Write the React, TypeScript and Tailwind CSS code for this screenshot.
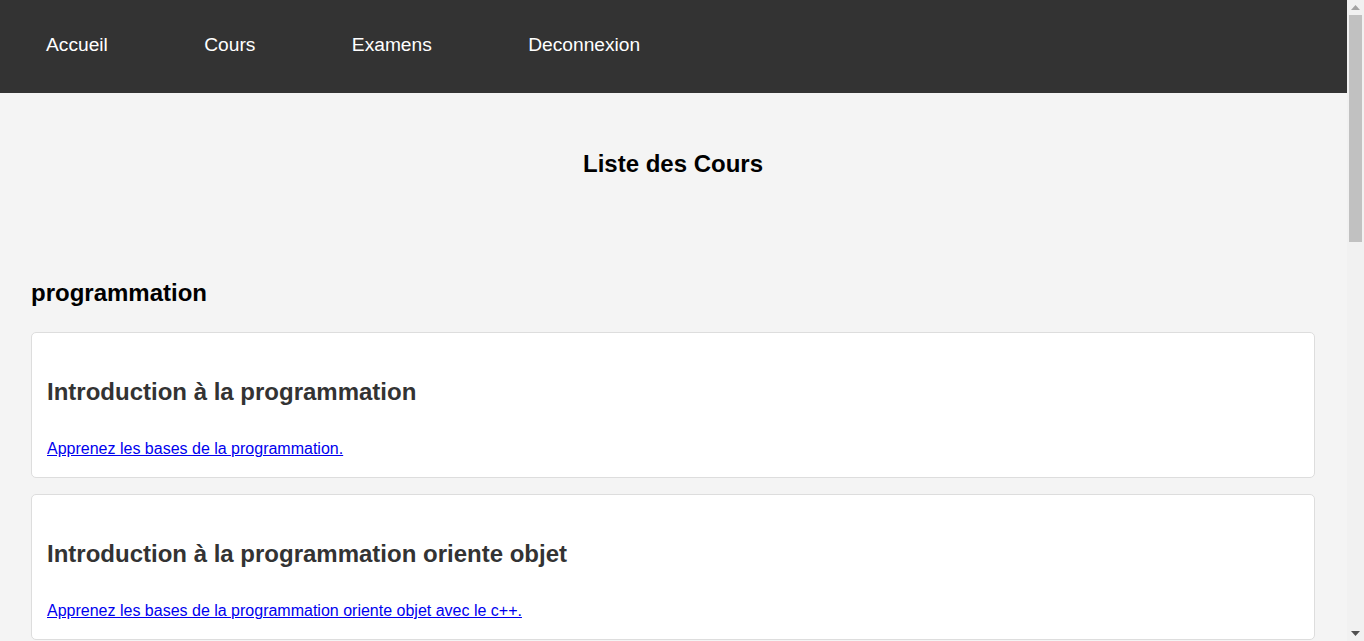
import React from 'react';

interface Course {
  title: string;
  description: string;
}

interface Category {
  name: string;
  courses: Course[];
}

const categories: Category[] = [
  {
    name: 'programmation',
    courses: [
      { title: 'Introduction à la programmation', description: 'Apprenez les bases de la programmation.' },
      { title: 'Introduction à la programmation oriente objet', description: 'Apprenez les bases de la programmation oriente objet avec le c++.' },
      { title: 'Structures de données', description: 'Apprenez les listes, piles, files et arbres.' },
      { title: 'Algorithmique', description: 'Apprenez à concevoir des algorithmes efficaces.' },
    ],
  },
  {
    name: 'web',
    courses: [
      { title: 'HTML et CSS', description: 'Apprenez à créer des pages web.' },
      { title: 'JavaScript', description: 'Apprenez à rendre vos pages web interactives.' },
    ],
  },
];

const navLinks = ['Accueil', 'Cours', 'Examens', 'Deconnexion'];

// window scrollbar as seen in the capture
function ScrollBar() {
  return (
    <div className="w-[17px] shrink-0 bg-[#f1f1f1] flex flex-col">
      <div className="h-[15px] flex items-center justify-center">
        <svg width="9" height="5" viewBox="0 0 9 5">
          <path d="M4.5 0 L9 5 L0 5 Z" fill="#a3a3a3" />
        </svg>
      </div>
      <div className="h-[227px] mx-[2px] bg-[#c1c1c1]" />
      <div className="flex-1" />
      <div className="h-[15px] flex items-center justify-center">
        <svg width="9" height="5" viewBox="0 0 9 5">
          <path d="M0 0 L9 0 L4.5 5 Z" fill="#505050" />
        </svg>
      </div>
    </div>
  );
}

export default function App() {
  return (
    <div className="h-screen flex overflow-hidden bg-[#f4f4f4] text-black font-['Liberation_Sans',Arial,sans-serif]">
      <div className="flex-1 min-w-0 overflow-hidden">
        {/* Top navigation */}
        <nav className="h-[93px] bg-[#333333] pl-[46px] pt-[34px]">
          <ul className="flex gap-[96.4px]">
            {navLinks.map((link) => (
              <li key={link}>
                <a href="#" className="text-[19.2px] leading-[22px] text-white">
                  {link}
                </a>
              </li>
            ))}
          </ul>
        </nav>

        <main className="pt-[57px] pb-[36px] pl-[31px] pr-[32px]">
          <h1 className="text-center text-[24px] leading-[28px] font-bold">Liste des Cours</h1>

          {categories.map((cat, i) => (
            <section key={cat.name} className={i === 0 ? 'mt-[101px]' : 'mt-[40px]'}>
              <h2 className="text-[24px] leading-[28px] font-bold">{cat.name}</h2>
              <div className="mt-[25px] flex flex-col gap-[16px]">
                {cat.courses.map((course) => (
                  <div
                    key={course.title}
                    className="bg-white border border-[#dddddd] rounded-[5px] px-[15px] pt-[45px] pb-[19px]"
                  >
                    <h3 className="text-[24px] leading-[28px] font-bold text-[#333333]">{course.title}</h3>
                    <a href="#" className="block mt-[34px] text-[16px] leading-[18px] text-[#0000ee] underline w-fit">
                      {course.description}
                    </a>
                  </div>
                ))}
              </div>
            </section>
          ))}
        </main>
      </div>
      <ScrollBar />
    </div>
  );
}
